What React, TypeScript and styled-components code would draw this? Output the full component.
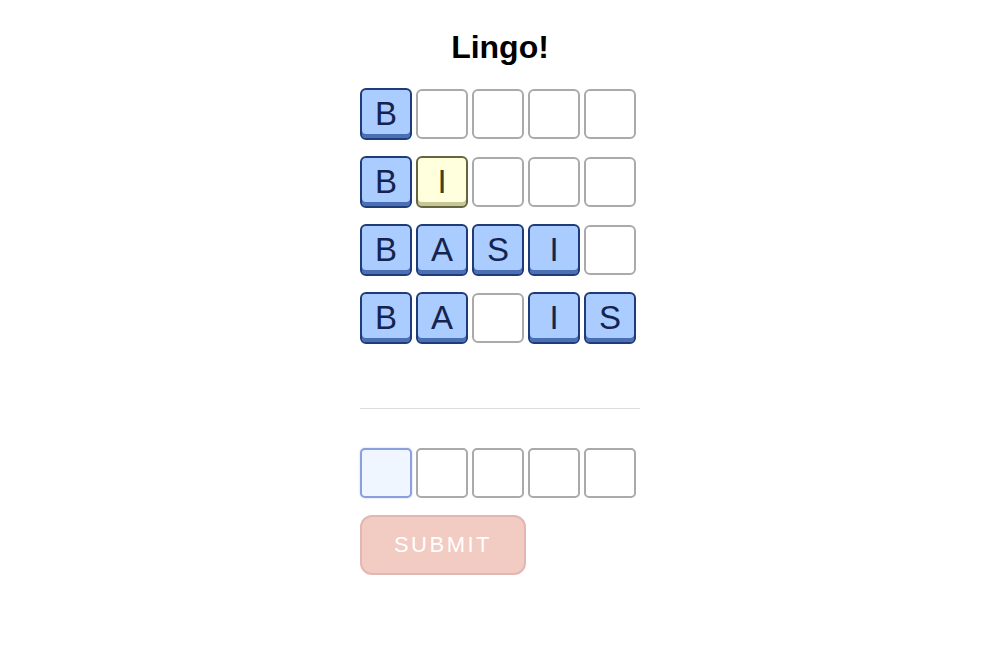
import styled, { createGlobalStyle, css } from "styled-components";

const GlobalStyle = createGlobalStyle`
  body {
    margin: 0;
    background: #ffffff;
    font-family: "Liberation Sans", Arial, sans-serif;
  }
`

type TileKind = "hit" | "near" | "empty";

const Page = styled.div`
  width: 280px;
  margin: 0 auto;
  padding-top: 26px;
  display: flex;
  flex-direction: column;
`

const Title = styled.h1`
  margin: 0 0 20px;
  text-align: center;
  font-size: 32px;
  font-weight: bold;
  color: #000;
  line-height: 42px;
`

const Board = styled.div`
  display: flex;
  flex-direction: column;
  gap: 16px;
`

const Row = styled.div`
  display: flex;
  gap: 4px;
`

const Tile = styled.div<{ $kind: TileKind }>`
  box-sizing: border-box;
  width: 52px;
  height: 52px;
  border-radius: 6px;
  display: flex;
  align-items: center;
  justify-content: center;
  font-size: 33px;
  line-height: 1;
  padding-bottom: 1px;
  ${({ $kind }) =>
    $kind === "hit"
      ? css`
          background: #aaccff;
          border: 2px solid #1f3b78;
          box-shadow: inset 0 -4px 0 #4a6fb4;
          color: #14244f;
        `
      : $kind === "near"
      ? css`
          background: #ffffdd;
          border: 2px solid #65653f;
          box-shadow: inset 0 -4px 0 #c6c697;
          color: #3f3f22;
        `
      : css`
          height: 50px;
          margin: 1px 0;
          background: #fff;
          border: 2px solid #aaaaaa;
        `}
`

const Divider = styled.hr`
  width: 100%;
  margin: 64px 0 38px;
  border: none;
  border-top: 1px solid #dddddd;
`

const InputRow = styled(Row)``

const InputTile = styled.div<{ $active?: boolean }>`
  box-sizing: border-box;
  width: 52px;
  height: 50px;
  margin: 1px 0;
  border-radius: 5px;
  border: 2px solid ${({ $active }) => ($active ? "#8a9fdc" : "#aaaaaa")};
  background: ${({ $active }) => ($active ? "#eff6ff" : "#fff")};
  box-shadow: ${({ $active }) => ($active ? "0 0 2px #b8c8f0" : "none")};
`

const Submit = styled.button`
  margin-top: 16px;
  align-self: flex-start;
  box-sizing: border-box;
  width: 166px;
  height: 60px;
  border-radius: 12px;
  border: 2px solid #e2b7b3;
  background: #f2cbc2;
  color: #ffffff;
  font-family: "Liberation Sans", Arial, sans-serif;
  font-size: 22px;
  letter-spacing: 2.5px;
  padding: 0;
`

const rows: string[] = ["B    ", "BI   ", "BASI ", "BA IS"];
const kinds: TileKind[][] = [
  ["hit", "empty", "empty", "empty", "empty"],
  ["hit", "near", "empty", "empty", "empty"],
  ["hit", "hit", "hit", "hit", "empty"],
  ["hit", "hit", "empty", "hit", "hit"],
];

const App = () => {
  return (
    <>
      <GlobalStyle />
      <Page>
        <Title>Lingo!</Title>
        <Board>
          {rows.map((word, r) => (
            <Row key={r}>
              {word.split("").map((ch, c) => (
                <Tile key={c} $kind={kinds[r][c]}>
                  {ch.trim()}
                </Tile>
              ))}
            </Row>
          ))}
        </Board>
        <Divider />
        <InputRow>
          {[0, 1, 2, 3, 4].map((i) => (
            <InputTile key={i} $active={i === 0} />
          ))}
        </InputRow>
        <Submit>SUBMIT</Submit>
      </Page>
    </>
  );
}
export default App;
